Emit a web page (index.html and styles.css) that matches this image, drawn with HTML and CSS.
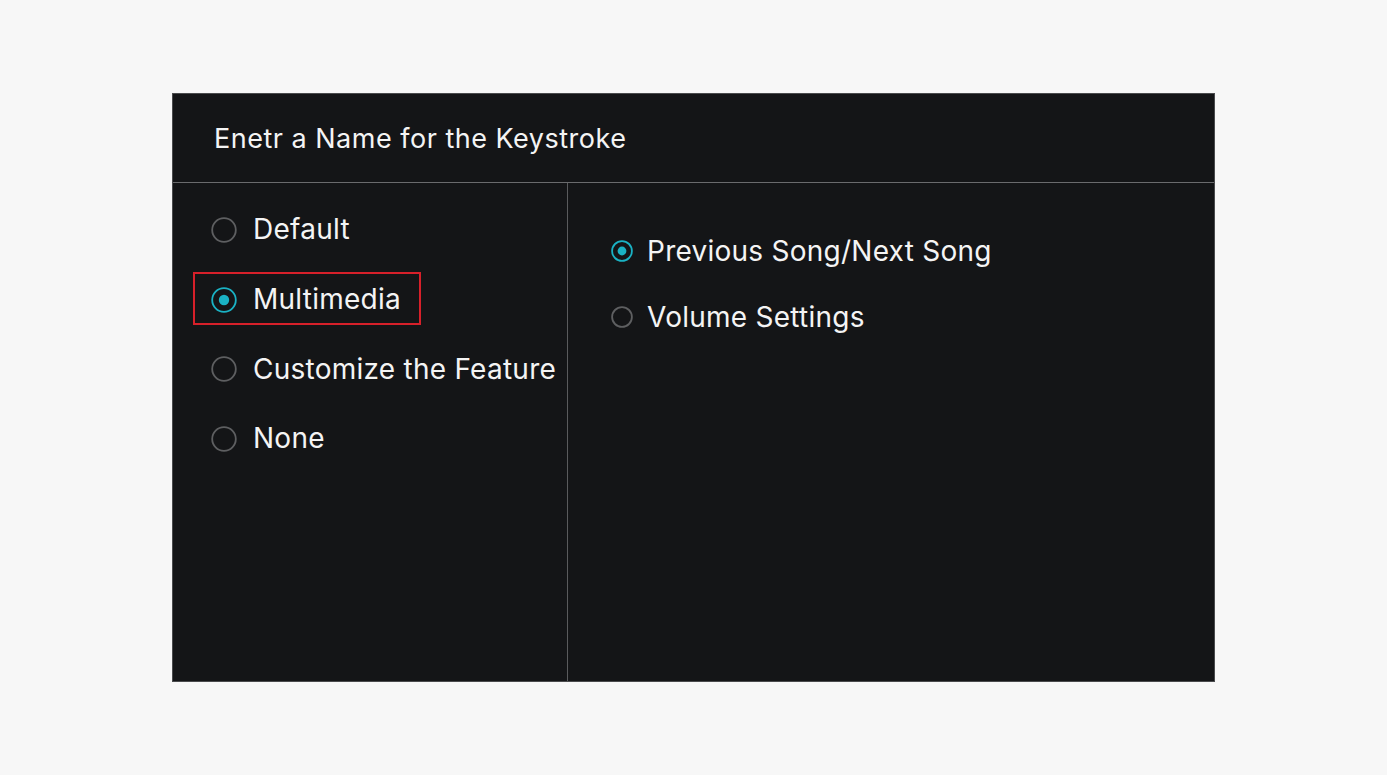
FILE: index.html
```html
<!DOCTYPE html>
<html lang="en">
<head>
<meta charset="utf-8">
<title>Keystroke</title>
<link rel="stylesheet" href="styles.css">
</head>
<body>
<div class="panel">
  <div class="header">Enetr a Name for the Keystroke</div>
  <div class="content">
    <div class="col-left">
      <div class="row">
        <svg class="radio-lg" viewBox="0 0 26 26"><circle cx="13" cy="13" r="11.8" fill="none" stroke="#5e5f61" stroke-width="1.8"/></svg>
        <span class="label">Default</span>
      </div>
      <div class="row">
        <span class="highlight"></span>
        <svg class="radio-lg" viewBox="0 0 26 26"><circle cx="13" cy="13" r="11.8" fill="none" stroke="#1ab2c4" stroke-width="1.8"/><circle cx="13" cy="13" r="5.2" fill="#1ab2c4"/></svg>
        <span class="label">Multimedia</span>
      </div>
      <div class="row">
        <svg class="radio-lg" viewBox="0 0 26 26"><circle cx="13" cy="13" r="11.8" fill="none" stroke="#5e5f61" stroke-width="1.8"/></svg>
        <span class="label">Customize the Feature</span>
      </div>
      <div class="row">
        <svg class="radio-lg" viewBox="0 0 26 26"><circle cx="13" cy="13" r="11.8" fill="none" stroke="#5e5f61" stroke-width="1.8"/></svg>
        <span class="label">None</span>
      </div>
    </div>
    <div class="col-right">
      <div class="row-sm">
        <svg class="radio-sm" viewBox="0 0 22 22"><circle cx="11" cy="11" r="9.9" fill="none" stroke="#1ab2c4" stroke-width="1.8"/><circle cx="11" cy="11" r="4.4" fill="#1ab2c4"/></svg>
        <span class="label">Previous Song/Next Song</span>
      </div>
      <div class="row-sm">
        <svg class="radio-sm" viewBox="0 0 22 22"><circle cx="11" cy="11" r="9.9" fill="none" stroke="#5e5f61" stroke-width="1.8"/></svg>
        <span class="label">Volume Settings</span>
      </div>
    </div>
  </div>
</div>
</body>
</html>
```
FILE: styles.css
```css
html, body {
  margin: 0;
  padding: 0;
}
body {
  background: #f7f7f7;
  font-family: Inter, "Noto Sans", "Liberation Sans", sans-serif;
  padding: 93px 0 0 172px;
  height: 775px;
  box-sizing: border-box;
}
.panel {
  width: 1043px;
  height: 589px;
  box-sizing: border-box;
  background: #141517;
  border: 1px solid #4a4b4d;
  display: flex;
  flex-direction: column;
  color: #f4f4f4;
}
.header {
  height: 89px;
  box-sizing: border-box;
  border-bottom: 1px solid #6a6b6d;
  padding-left: 41px;
  display: flex;
  align-items: center;
  font-size: 27px;
  letter-spacing: 0.5px;
}
.content {
  flex: 1;
  display: flex;
}
.col-left {
  width: 395px;
  box-sizing: border-box;
  border-right: 1px solid #5a5b5d;
  padding: 12px 0 0 38px;
}
.col-right {
  flex: 1;
  padding: 35px 0 0 43px;
}
.row {
  position: relative;
  height: 69.7px;
  display: flex;
  align-items: center;
  gap: 16px;
}
.row-sm {
  height: 66px;
  display: flex;
  align-items: center;
  gap: 14px;
}
.radio-lg {
  width: 26px;
  height: 26px;
  flex: none;
}
.radio-sm {
  width: 22px;
  height: 22px;
  flex: none;
}
.label {
  font-size: 28px;
  letter-spacing: 0.25px;
  line-height: 1;
  padding-bottom: 1px;
}
.highlight {
  position: absolute;
  left: -18px;
  top: 7px;
  width: 228px;
  height: 53px;
  box-sizing: border-box;
  border: 2px solid #d7202a;
}
```
